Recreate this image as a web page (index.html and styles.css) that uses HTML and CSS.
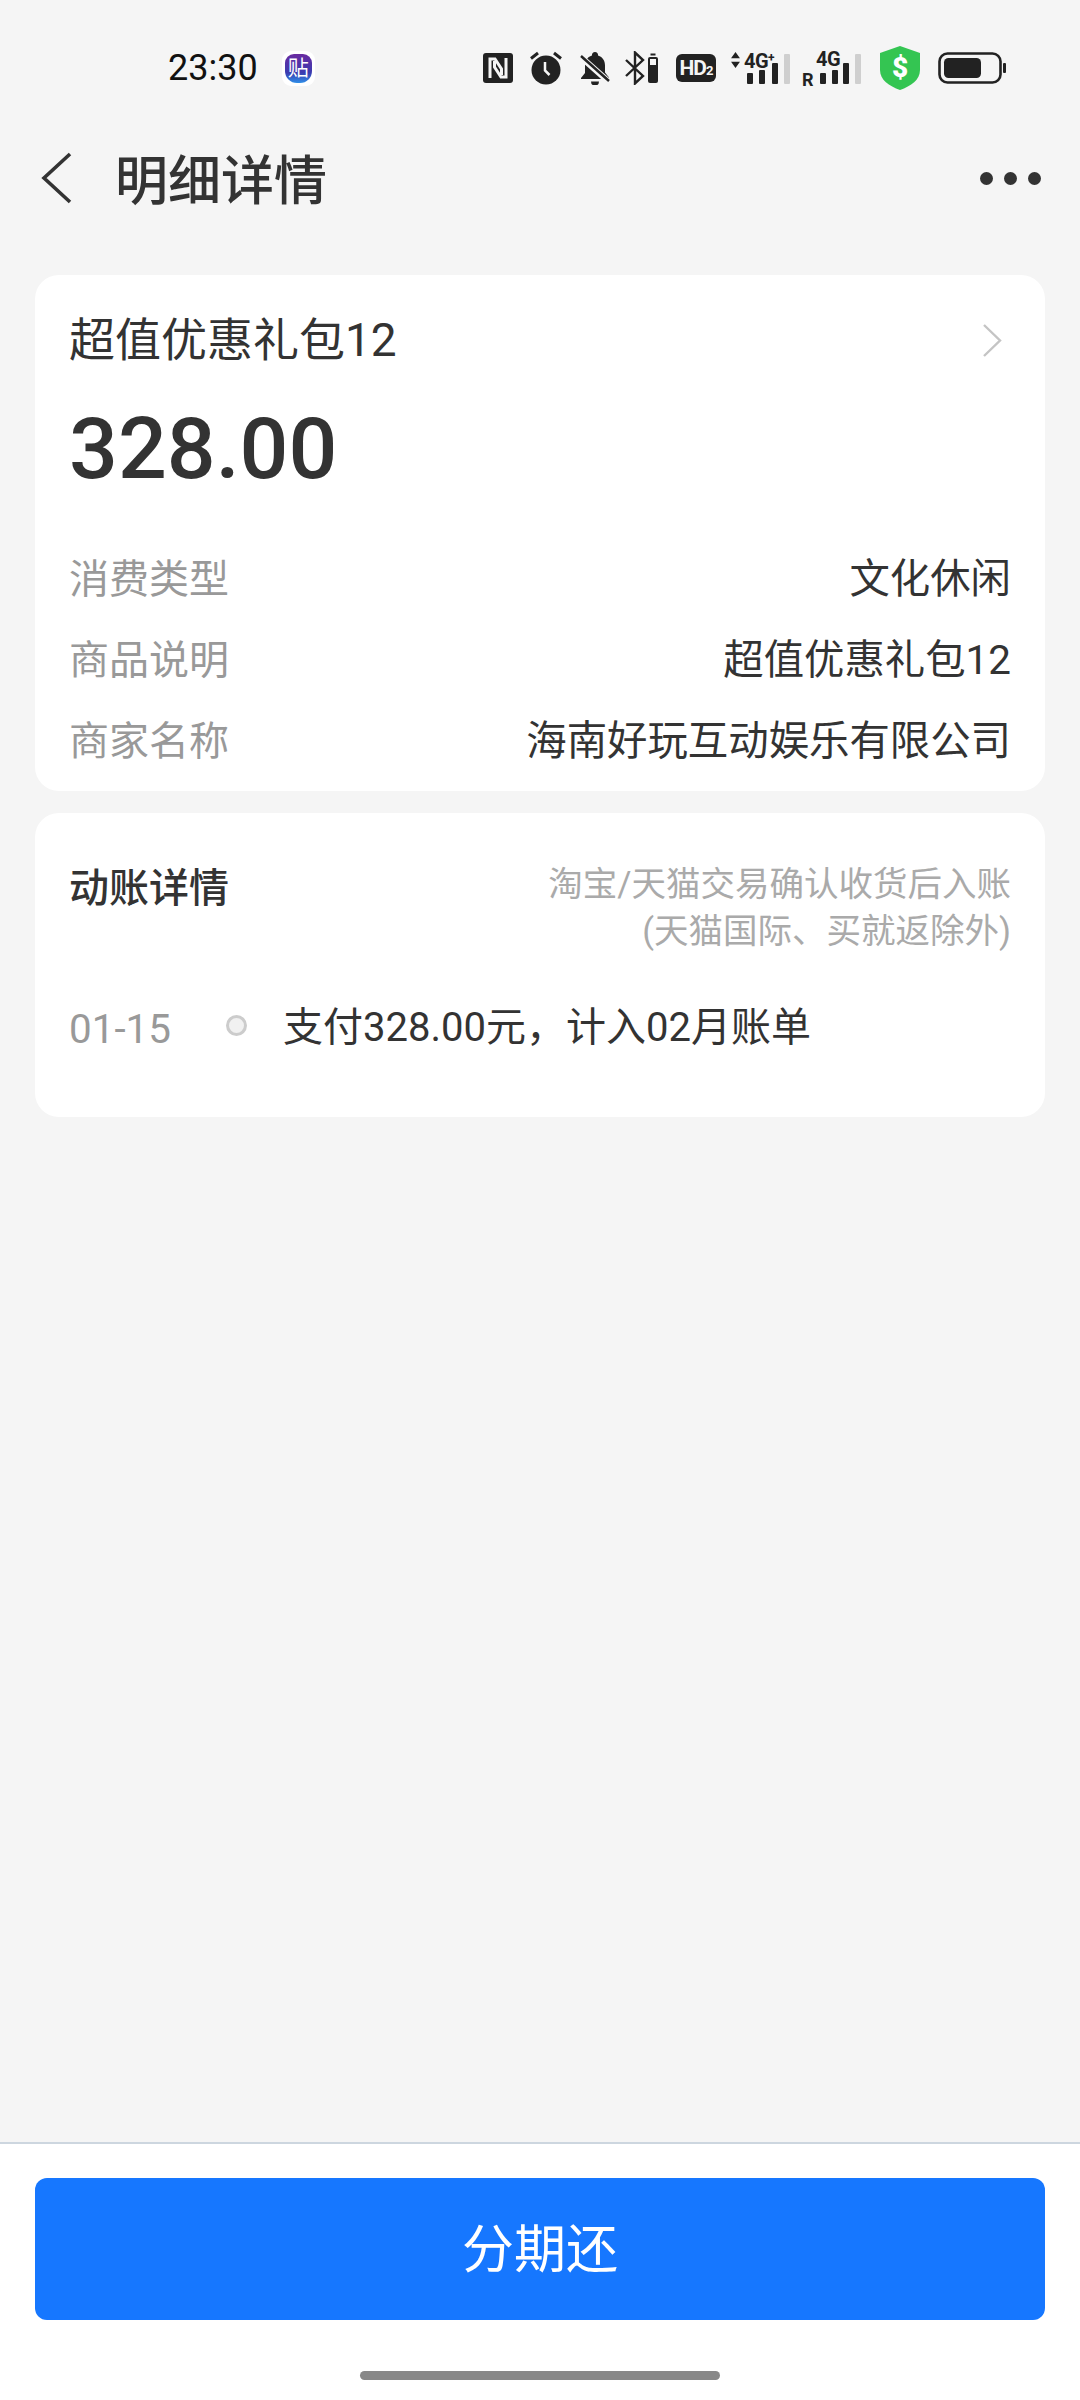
FILE: index.html
```html
<!DOCTYPE html>
<html lang="zh-CN">
	<head>
		<meta charset="utf-8">
		<title>明细详情</title>
		<link rel="stylesheet" href="styles.css">
	</head>
	<body>
		<div class="page">
			<div class="status">
				<span class="time">23:30</span>
				<span class="appBadge"><span class="appBadgeInner">贴</span></span>
				<div class="statusIcons">
					<svg class="icNfc" viewBox="0 0 30 30"><rect width="30" height="30" rx="3" fill="#222"/><path d="M7 25V6h5l6.500 10V22M23 5v19h-5l-6.500-10V8" fill="none" stroke="#f5f5f5" stroke-width="3"/></svg>
					<svg class="icAlarm" viewBox="0 0 32 34"><circle cx="16" cy="19" r="14.500" fill="#222"/><path d="M15 11v8.500l4.500 4.500" fill="none" stroke="#f5f5f5" stroke-width="2.500"/><path d="M1 7.500L8 2M31 7.500L24 2" stroke="#222" stroke-width="3"/></svg>
					<svg class="icBell" viewBox="0 0 30 34"><path d="M15 1a3 3 0 0 1 3 3.500c5 1.500 7 5.500 7 10v7l4 5v1.500H1V27l4-5v-7.500c0-4.500 2-8.500 7-10A3 3 0 0 1 15 1zM11 30.500h8a4 4 0 0 1-8 0z" fill="#222"/><path d="M1 6l28 25" stroke="#f5f5f5" stroke-width="6"/><path d="M1 5l28 25" stroke="#222" stroke-width="2.500"/></svg>
					<svg class="icBt" viewBox="0 0 33 34"><path d="M1 9l17 16-8 7.500V1.500L18 9 1 25" fill="none" stroke="#222" stroke-width="2.400"/><rect x="23" y="6" width="10" height="26" rx="2" fill="#222"/><rect x="25.500" y="2.500" width="5" height="2" fill="#222"/><rect x="25" y="8" width="6" height="6" fill="#f5f5f5"/></svg>
					<span class="icHd">HD<small>2</small></span>
					<div class="signal signalA">
						<svg class="arrows" viewBox="0 0 10 18"><path d="M5 0l5 7H0zM5 18l5-7H0z" fill="#222"/></svg>
						<span class="gen">4G<sup>+</sup></span>
						<span class="bar barA"></span><span class="bar barB"></span><span class="bar barC"></span><span class="bar barOff"></span>
					</div>
					<div class="signal signalB">
						<span class="roam">R</span>
						<span class="gen">4G</span>
						<span class="bar barA"></span><span class="bar barB"></span><span class="bar barC"></span><span class="bar barOff"></span>
					</div>
					<svg class="icShield" viewBox="0 0 40 44"><path d="M20 0l20 7v17c0 10-9 16-20 20C9 40 0 34 0 24V7z" fill="#34c552"/><text x="20" y="31" text-anchor="middle" class="shieldText">$</text></svg>
					<svg class="icBattery" viewBox="0 0 68 32"><rect x="1.500" y="1.500" width="61" height="29" rx="8" fill="none" stroke="#222" stroke-width="2.600"/><rect x="6" y="6" width="37" height="20" rx="4.500" fill="#222"/><rect x="65" y="11" width="3" height="10" rx="1" fill="#222"/></svg>
				</div>
			</div>

			<header class="topBar">
				<svg class="back" viewBox="0 0 31 52"><path d="M29 2L3 26l26 24" fill="none" stroke="#333" stroke-width="3.600"/></svg>
				<h1 class="pageTitle">明细详情</h1>
				<div class="more"><i></i><i></i><i></i></div>
			</header>

			<main class="content">
				<section class="card summary">
					<div class="summaryHead">
						<span class="itemName">超值优惠礼包12</span>
						<svg class="chevron" viewBox="0 0 21 35"><path d="M2 2l16 15.500L2 33" fill="none" stroke="#c4c4c4" stroke-width="2.400"/></svg>
					</div>
					<div class="amount">328.00</div>
					<div class="infoRow"><span class="infoLabel">消费类型</span><span>文化休闲</span></div>
					<div class="infoRow"><span class="infoLabel">商品说明</span><span>超值优惠礼包12</span></div>
					<div class="infoRow"><span class="infoLabel">商家名称</span><span>海南好玩互动娱乐有限公司</span></div>
				</section>

				<section class="card movement">
					<div class="movementHead">
						<h2 class="movementTitle">动账详情</h2>
						<p class="movementNote">淘宝/天猫交易确认收货后入账<br>(天猫国际、买就返除外)</p>
					</div>
					<div class="movementRow">
						<span class="movementDate">01-15</span>
						<span class="dot"></span>
						<span class="movementText">支付328.00元，计入02月账单</span>
					</div>
				</section>
			</main>

			<footer class="footer">
				<button class="payBtn" type="button">分期还</button>
				<div class="homeBar"></div>
			</footer>
		</div>
	</body>
</html>
```

FILE: styles.css
```css
* { box-sizing: border-box; }

body {
	margin: 0;
	background: #f5f5f5;
	color: #333;
	font-family: Roboto, "Noto Sans CJK SC", sans-serif;
}

.page { display: flex; flex-direction: column; width: 1080px; height: 2400px; overflow: hidden; }

/* status bar */
.status { display: flex; align-items: center; height: 88px; padding: 48px 74px 0 168px; flex: none; }
.time { font-size: 36px; line-height: 40px; color: #111; }
.appBadge { display: flex; align-items: center; justify-content: center; width: 33px; height: 35px; margin-left: 24px; background: #fff; border-radius: 9px; }
.appBadgeInner {
	display: block;
	width: 27px;
	height: 29px;
	border-radius: 9px 9px 12px 12px;
	background: linear-gradient(180deg, #6a2aa0 0%, #3b3cb0 65%, #2f8fe8 100%);
	color: #fff;
	font-size: 21px;
	line-height: 28px;
	text-align: center;
}
.statusIcons { display: flex; align-items: center; margin-left: auto; color: #222; }
.statusIcons svg { display: block; flex: none; }
.icNfc { width: 30px; height: 30px; }
.icAlarm { width: 32px; height: 34px; margin-left: 17px; }
.icBell { width: 30px; height: 34px; margin-left: 18px; }
.icBt { width: 33px; height: 34px; margin-left: 15px; }
.icHd {
	width: 40px;
	height: 28px;
	margin-left: 18px;
	background: #222;
	border-radius: 6px;
	color: #f5f5f5;
	font-size: 21px;
	font-weight: 700;
	line-height: 28px;
	text-align: center;
	letter-spacing: -1px;
}
.icHd small { font-size: 13px; }
.signal { position: relative; height: 34px; flex: none; }
.signalA { width: 60px; margin-left: 14px; }
.signalB { width: 59px; margin-left: 12px; }
.arrows { position: absolute; left: 0; top: 1px; width: 11px; height: 16px; }
.gen { position: absolute; font-size: 20px; font-weight: 700; line-height: 20px; letter-spacing: -0.5px; color: #222; }
.gen sup { font-size: 12px; line-height: 0; vertical-align: 6px; }
.signalA .gen { left: 14px; top: 0; }
.signalB .gen { left: 14px; top: -2px; }
.roam { position: absolute; left: 0; bottom: -1px; font-size: 18px; font-weight: 700; line-height: 13px; color: #222; }
.bar { position: absolute; bottom: 1px; width: 6px; border-radius: 1px; background: #222; }
.barA { height: 11px; }
.barB { height: 14px; }
.barC { height: 21px; }
.barOff { height: 30px; background: #cfcfcf; }
.signalA .barA { left: 17px; }
.signalA .barB { left: 29px; }
.signalA .barC { left: 42px; }
.signalA .barOff { left: 54px; }
.signalB .barA { left: 18px; }
.signalB .barB { left: 30px; }
.signalB .barC { left: 41px; }
.signalB .barOff { left: 53px; }
.icShield { width: 40px; height: 44px; margin-left: 19px; }
.shieldText { fill: #fff; font-family: Roboto, sans-serif; font-size: 28px; font-weight: 900; }
.icBattery { width: 68px; height: 32px; margin-left: 18px; }

/* title bar */
.topBar { display: flex; align-items: center; height: 180px; padding: 0 39px 0 41px; flex: none; }
.back { width: 31px; height: 52px; }
.pageTitle { margin: -2px 0 0 43px; font-size: 53px; font-weight: 500; color: #333; }
.more { display: flex; gap: 11px; margin-left: auto; }
.more i { display: block; width: 13px; height: 13px; border-radius: 50%; background: #333; }

/* cards */
.content { display: flex; flex-direction: column; gap: 22px; flex: 1; padding: 7px 35px 0; }
.card { background: #fff; border-radius: 24px; padding: 0 34px; }
.summary { height: 516px; padding-top: 40px; }
.summaryHead { display: flex; align-items: center; justify-content: space-between; height: 50px; padding-right: 8px; }
.itemName { font-size: 46px; line-height: 50px; }
.chevron { width: 21px; height: 35px; }
.amount { margin-top: 34px; margin-bottom: 36px; font-size: 86px; font-weight: 500; line-height: 100px; color: #333; }
.infoRow { display: flex; justify-content: space-between; align-items: center; height: 81px; font-size: 40.400px; }
.infoLabel { font-size: 40px; color: #999; }

.movement { height: 304px; padding-top: 48px; }
.movementHead { display: flex; justify-content: space-between; align-items: flex-start; }
.movementTitle { margin: 3px 0 0; font-size: 40px; font-weight: 500; line-height: 50px; }
.movementNote { margin: 0; font-size: 34.500px; line-height: 47px; color: #aaa; text-align: right; }
.movementRow { display: flex; align-items: center; height: 60px; margin-top: 41px; font-size: 40px; }
.movementDate { width: 157px; padding-top: 7px; font-size: 40.400px; color: #999; }
.dot { width: 21px; height: 21px; margin-top: -2px; margin-right: 36px; border: 3px solid #ccc; border-radius: 50%; background: #f1f1f1; }
.movementText { margin-top: -5px; }

/* footer */
.footer { display: flex; flex-direction: column; align-items: center; height: 258px; padding-top: 34px; background: #fff; border-top: 2px solid #cdd6df; flex: none; }
.payBtn {
	width: 1010px;
	height: 142px;
	padding-bottom: 8px;
	border: 0;
	border-radius: 12px;
	background: #1677ff;
	color: #fff;
	font-family: inherit;
	font-size: 52px;
}
.homeBar { width: 360px; height: 9px; margin-top: 51px; border-radius: 5px; background: #888; }
```
